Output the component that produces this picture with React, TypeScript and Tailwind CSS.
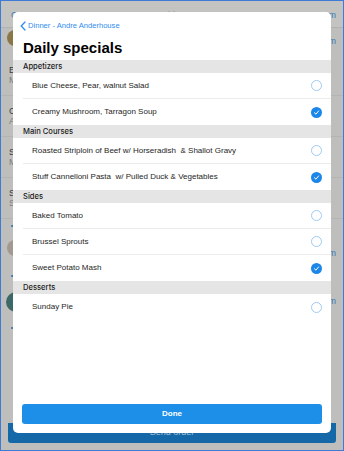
import React, { useState } from "react";

type Dish = { name: string; checked: boolean };
type Section = { title: string; dishes: Dish[] };

const MENU: Section[] = [
  {
    title: "Appetizers",
    dishes: [
      { name: "Blue Cheese, Pear, walnut Salad", checked: false },
      { name: "Creamy Mushroom, Tarragon Soup", checked: true },
    ],
  },
  {
    title: "Main Courses",
    dishes: [
      { name: "Roasted Striploin of Beef w/ Horseradish  & Shallot Gravy", checked: false },
      { name: "Stuff Cannelloni Pasta  w/ Pulled Duck & Vegetables", checked: true },
    ],
  },
  {
    title: "Sides",
    dishes: [
      { name: "Baked Tomato", checked: false },
      { name: "Brussel Sprouts", checked: false },
      { name: "Sweet Potato Mash", checked: true },
    ],
  },
  {
    title: "Desserts",
    dishes: [{ name: "Sunday Pie", checked: false }],
  },
];

const Check = ({ on }: { on: boolean }) =>
  on ? (
    <span className="flex h-[11px] w-[11px] items-center justify-center rounded-full bg-[#1c87e8]">
      <svg width="7" height="7" viewBox="0 0 10 10" fill="none">
        <path d="M2 5.3 L4.2 7.4 L8 2.8" stroke="white" strokeWidth="1.4" strokeLinecap="round" strokeLinejoin="round" />
      </svg>
    </span>
  ) : (
    <span className="h-[11px] w-[11px] rounded-full border border-[#9fcaf4]" />
  );

// rows of the order list under the sheet, only the left edge shows
const BgRow = ({ a, b }: { a: string; b: string }) => (
  <div className="flex h-[41px] flex-col justify-center border-b border-[#b4b5b2] pl-[8px]">
    <span className="text-[9px] leading-[10px] text-[#3b3b3a]">{a}</span>
    <span className="text-[9px] leading-[11px] text-[#7c7d7a]">{b}</span>
  </div>
);

const App = () => {
  const [menu, setMenu] = useState(MENU);

  const toggle = (s: number, d: number) => {
    setMenu((m) =>
      m.map((sec, i) =>
        i !== s
          ? sec
          : { ...sec, dishes: sec.dishes.map((x, j) => (j === d ? { ...x, checked: !x.checked } : x)) }
      )
    );
  };

  return (
    <div
      className="relative h-[451px] w-[344px] overflow-hidden border border-[#3f7bd6] bg-[#bebfbc]"
      style={{ fontFamily: '"Liberation Sans", Arial, sans-serif' }}
    >
      {/* page behind the sheet */}
      <div className="flex h-full flex-col">
        <div className="flex h-[27px] items-center justify-between border-b border-[#b1b2af] bg-[#c3c4c1] pl-[10px] pr-[7px] pt-[4px]">
          <span className="text-[9px] text-[#3a78b5]">C</span>
          <span className="text-[9px] text-[#8f908d]">Table 4</span>
          <span className="text-[9px] text-[#3a78b5]">m</span>
        </div>
        <div className="flex h-[27px] items-start justify-between pl-[6px] pr-[7px] pt-[2px]">
          <span className="h-[16px] w-[16px] rounded-full bg-[#8a7748]" />
          <span className="mt-[5px] text-[9px] text-[#3a78b5]">m</span>
        </div>
        <BgRow a="Eg" b="M" />
        <BgRow a="C" b="A" />
        <BgRow a="St" b="M" />
        <BgRow a="Sw" b="Si" />
        <div className="flex h-[14px] items-center pl-[10px]">
          <span className="h-[2px] w-[3px] rounded-full bg-[#3a78b5]" />
        </div>
        <div className="flex h-[30px] items-center justify-between pl-[6px] pr-[7px]">
          <span className="h-[16px] w-[16px] rounded-full bg-[#a39993]" />
          <span className="mt-[12px] text-[9px] text-[#3a78b5]">m</span>
        </div>
        <div className="flex h-[26px] items-center pl-[10px]">
          <span className="h-[2px] w-[3px] rounded-full bg-[#3a78b5]" />
        </div>
        <div className="flex h-[26px] items-center justify-between pl-[5px] pr-[7px]">
          <span className="h-[20px] w-[20px] rounded-full bg-[#3d6868]" />
          <span className="text-[9px] text-[#3a78b5]">m</span>
        </div>
        <div className="flex h-[26px] items-center pl-[10px]">
          <span className="h-[2px] w-[3px] rounded-full bg-[#3a78b5]" />
        </div>
        <div className="mt-auto mb-[7px] ml-[7px] mr-[7px] flex h-[20px] items-center justify-center rounded-b-[3px] bg-[#1568a8]">
          <span className="text-[9px] text-[#a8bfd3]">Send order</span>
        </div>
      </div>

      {/* sheet */}
      <div className="absolute left-[12px] top-[11px] flex h-[421px] w-[318px] flex-col rounded-[5px] bg-white">
        <button className="flex items-center gap-[2px] pl-[7px] pt-[9px] text-[7.6px] leading-[10px] text-[#2f8cf0]">
          <svg width="6" height="10" viewBox="0 0 6 10" fill="none">
            <path d="M5 1 L1.2 5 L5 9" stroke="#2f8cf0" strokeWidth="1.3" strokeLinecap="round" strokeLinejoin="round" />
          </svg>
          Dinner - Andre Anderhouse
        </button>
        <h1 className="mt-[8px] pl-[10px] text-[15px] font-bold leading-[18px] text-black">Daily specials</h1>
        <div className="mt-[3px]">
          {menu.map((sec, si) => (
            <div key={sec.title}>
              <div
                className="flex h-[13px] items-center bg-[#e5e5e5] pl-[10px] text-[7.6px] font-medium text-[#1a1a1a]"
                style={{ fontFamily: "Inter, sans-serif" }}
              >
                {sec.title}
              </div>
              {sec.dishes.map((d, di) => (
                <div
                  key={d.name}
                  onClick={() => toggle(si, di)}
                  className={
                    "ml-[10px] flex h-[26px] items-center justify-between pl-[9px] pr-[9px] " +
                    (di < sec.dishes.length - 1 ? "border-b border-[#ececec]" : "")
                  }
                >
                  <span className="whitespace-pre text-[8px] text-[#262626]">{d.name}</span>
                  <Check on={d.checked} />
                </div>
              ))}
            </div>
          ))}
        </div>
        <div className="mt-auto px-[9px] pb-[9px]">
          <button className="flex h-[20px] w-full items-center justify-center rounded-[3px] bg-[#1e8fe8] text-[8px] font-semibold text-white">
            Done
          </button>
        </div>
      </div>
    </div>
  );
};

export default App;
